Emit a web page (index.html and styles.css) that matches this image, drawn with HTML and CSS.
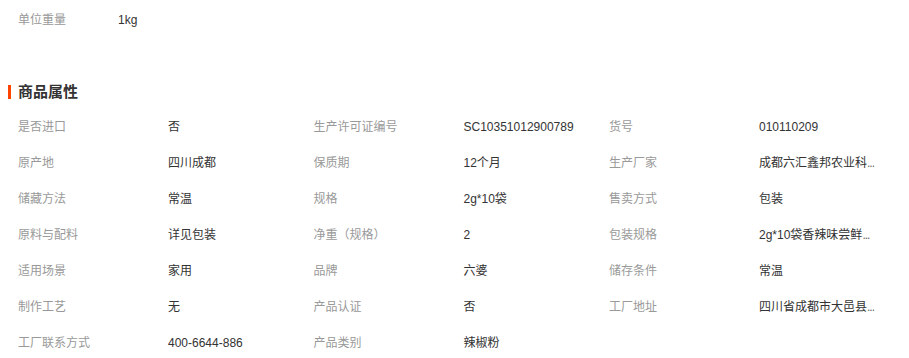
FILE: index.html
```html
<!DOCTYPE html>
<html lang="zh-CN">
<head>
<meta charset="utf-8">
<link rel="stylesheet" href="styles.css">
</head>
<body>
<div class="page">
  <div class="top-row">
    <span class="top-label">单位重量</span>
    <span class="top-value">1kg</span>
  </div>
  <h2 class="section-title"><span class="bar"></span>商品属性</h2>
  <div class="attrs">
    <div class="cell"><span class="label">是否进口</span><span class="value">否</span></div>
    <div class="cell"><span class="label">生产许可证编号</span><span class="value">SC10351012900789</span></div>
    <div class="cell"><span class="label">货号</span><span class="value">010110209</span></div>

    <div class="cell"><span class="label">原产地</span><span class="value">四川成都</span></div>
    <div class="cell"><span class="label">保质期</span><span class="value">12个月</span></div>
    <div class="cell"><span class="label">生产厂家</span><span class="value">成都六汇鑫邦农业科<span class="dots">...</span></span></div>

    <div class="cell"><span class="label">储藏方法</span><span class="value">常温</span></div>
    <div class="cell"><span class="label">规格</span><span class="value">2g*10袋</span></div>
    <div class="cell"><span class="label">售卖方式</span><span class="value">包装</span></div>

    <div class="cell"><span class="label">原料与配料</span><span class="value">详见包装</span></div>
    <div class="cell"><span class="label">净重（规格）</span><span class="value">2</span></div>
    <div class="cell"><span class="label">包装规格</span><span class="value">2g*10袋香辣味尝鲜<span class="dots">...</span></span></div>

    <div class="cell"><span class="label">适用场景</span><span class="value">家用</span></div>
    <div class="cell"><span class="label">品牌</span><span class="value">六婆</span></div>
    <div class="cell"><span class="label">储存条件</span><span class="value">常温</span></div>

    <div class="cell"><span class="label">制作工艺</span><span class="value">无</span></div>
    <div class="cell"><span class="label">产品认证</span><span class="value">否</span></div>
    <div class="cell"><span class="label">工厂地址</span><span class="value">四川省成都市大邑县<span class="dots">...</span></span></div>

    <div class="cell"><span class="label">工厂联系方式</span><span class="value">400-6644-886</span></div>
    <div class="cell"><span class="label">产品类别</span><span class="value">辣椒粉</span></div>
  </div>
</div>
</body>
</html>
```

FILE: styles.css
```css
html, body {
  margin: 0;
  padding: 0;
  background: #fff;
}

.page {
  font-family: "Liberation Sans", "Noto Sans CJK SC", sans-serif;
  font-size: 12px;
  color: #333;
  width: 909px;
  height: 358px;
  overflow: hidden;
}

.top-row {
  display: flex;
  padding-left: 18px;
  height: 40px;
  line-height: 40px;
}

.top-label {
  width: 100px;
  color: #999;
}

.top-value {
  color: #333;
}

.section-title {
  display: flex;
  align-items: center;
  margin: 42px 0 0 0;
  padding-left: 8px;
  height: 20px;
  line-height: 20px;
  font-size: 15px;
  font-weight: bold;
  color: #333;
}

.bar {
  width: 3px;
  height: 14px;
  background: #ff4400;
  margin-right: 7px;
}

.attrs {
  display: grid;
  grid-template-columns: repeat(3, 295.5px);
  margin-top: 7px;
  padding-left: 18px;
}

.cell {
  display: flex;
  height: 36px;
  line-height: 36px;
}

.label {
  width: 150px;
  flex: none;
  color: #999;
}

.value {
  white-space: nowrap;
  color: #333;
}

.dots {
  letter-spacing: -1px;
  color: #666;
}
```
